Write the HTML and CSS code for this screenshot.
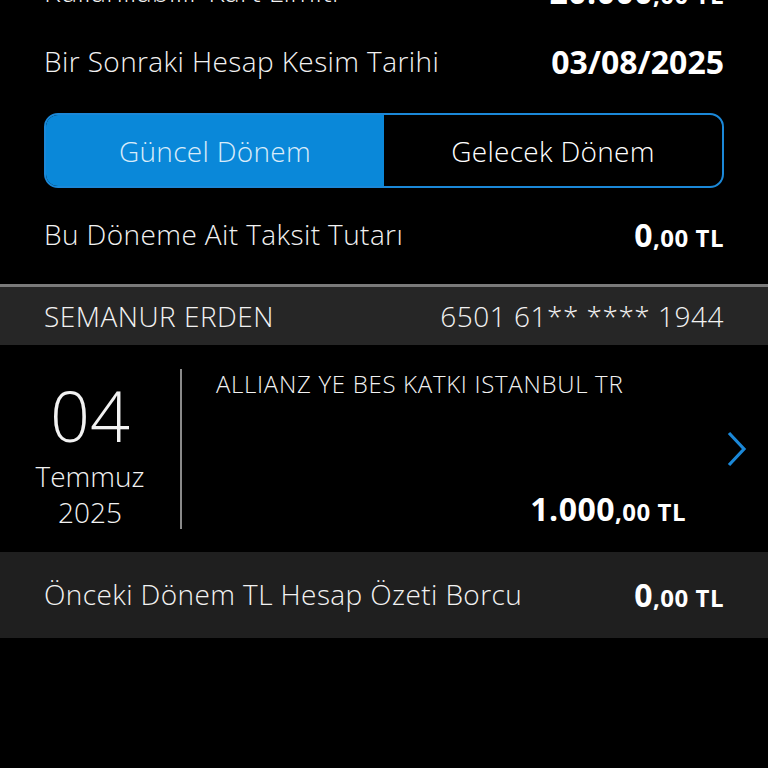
FILE: index.html
```html
<!DOCTYPE html>
<html lang="tr">
<head>
<meta charset="utf-8">
<link rel="stylesheet" href="styles.css">
</head>
<body>
<div class="page">
  <section class="info">
    <div class="row row-first">
      <span class="label">Kullanılabilir Kart Limiti</span>
      <span class="amount"><span class="big">20.000</span><span class="small">,00 TL</span></span>
    </div>
    <div class="row">
      <span class="label">Bir Sonraki Hesap Kesim Tarihi</span>
      <span class="date">03/08/2025</span>
    </div>
    <div class="segment">
      <div class="seg seg-active">Güncel Dönem</div>
      <div class="seg">Gelecek Dönem</div>
    </div>
    <div class="row">
      <span class="label">Bu Döneme Ait Taksit Tutarı</span>
      <span class="amount"><span class="big">0</span><span class="small">,00 TL</span></span>
    </div>
  </section>
  <div class="divider"></div>
  <div class="card-head">
    <span>SEMANUR ERDEN</span>
    <span>6501 61** **** 1944</span>
  </div>
  <div class="txn">
    <div class="txn-date">
      <div class="day">04</div>
      <div class="month">Temmuz</div>
      <div class="year">2025</div>
    </div>
    <div class="txn-body">
      <div class="desc">ALLIANZ YE BES KATKI ISTANBUL TR</div>
      <div class="txn-amount"><span class="big">1.000</span><span class="small">,00 TL</span></div>
    </div>
    <svg class="chev" width="22" height="36" viewBox="0 0 22 36"><path d="M3 2 L18 18 L3 34" fill="none" stroke="#1b88d8" stroke-width="3.2"/></svg>
  </div>
  <div class="prev">
    <span class="label">Önceki Dönem TL Hesap Özeti Borcu</span>
    <span class="amount"><span class="big">0</span><span class="small">,00 TL</span></span>
  </div>
</div>
</body>
</html>
```

FILE: styles.css
```css
html, body {
  margin: 0;
  padding: 0;
  background: #000;
  height: 100%;
  overflow: hidden;
}
body {
  font-family: "Open Sans", "Noto Sans", sans-serif;
  color: #f2f2f2;
}
.page {
  margin-top: -40px;
}
.info {
  padding: 0 44px;
}
.row {
  height: 74px;
  box-sizing: border-box;
  padding-bottom: 4px;
  display: flex;
  align-items: center;
  justify-content: space-between;
}
.row-first {
  height: 66px;
}
.label {
  font-size: 28px;
  font-weight: 300;
  letter-spacing: 0.4px;
}
.date {
  font-size: 32px;
  font-weight: 700;
  letter-spacing: 0;
  color: #fff;
}
.amount, .txn-amount {
  font-weight: 700;
  color: #fff;
  white-space: nowrap;
}
.big {
  font-size: 32px;
  letter-spacing: 0.5px;
}
.small {
  font-size: 24px;
  letter-spacing: 0.5px;
}
.segment {
  margin-top: 13px;
  margin-bottom: 11px;
  height: 75px;
  box-sizing: border-box;
  border: 2px solid #1b88d8;
  border-radius: 14px;
  display: flex;
  overflow: hidden;
}
.seg {
  flex: 1;
  display: flex;
  align-items: center;
  justify-content: center;
  font-size: 28px;
  font-weight: 300;
  letter-spacing: 0.3px;
  color: #fff;
}
.seg-active {
  background: #0a88d9;
  color: #d9ecfa;
}
.divider {
  margin-top: 11px;
  height: 3px;
  background: #7a7a7a;
}
.card-head {
  height: 58px;
  background: #262626;
  display: flex;
  align-items: center;
  justify-content: space-between;
  padding: 0 44px;
  font-size: 28px;
  font-weight: 300;
  letter-spacing: 0.5px;
}
.txn {
  height: 207px;
  display: flex;
  align-items: center;
}
.txn-date {
  width: 182px;
  height: 160px;
  box-sizing: border-box;
  padding-top: 12px;
  border-right: 2px solid #8a8a8a;
  display: flex;
  flex-direction: column;
  align-items: center;
  justify-content: center;
}
.day {
  font-size: 70px;
  font-weight: 300;
  line-height: 1;
  margin-bottom: 8px;
}
.month, .year {
  font-size: 28px;
  font-weight: 300;
  line-height: 36px;
}
.txn-body {
  flex: 1;
  align-self: stretch;
  display: flex;
  flex-direction: column;
  justify-content: space-between;
  padding: 22px 0 22px 34px;
}
.desc {
  font-size: 24px;
  font-weight: 300;
  letter-spacing: 0.7px;
}
.txn-amount {
  align-self: flex-end;
}
.chev {
  margin: 0 20px 0 40px;
}
.prev {
  height: 86px;
  background: #1f1f1f;
  display: flex;
  align-items: center;
  justify-content: space-between;
  padding: 0 44px 2px;
  box-sizing: border-box;
}
```
